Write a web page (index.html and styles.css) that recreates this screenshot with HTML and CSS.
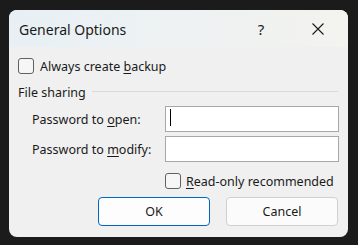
FILE: index.html
```html
<!DOCTYPE html>
<html lang="en">
<head>
    <meta charset="UTF-8">
    <meta name="viewport" content="width=device-width, initial-scale=1.0">
    <title>General Options</title>
    <link rel="stylesheet" href="styles.css">
</head>
<body>

<!-- Dialog Window -->
<div class="dialog">
    <div class="titlebar">
        <span class="title">General Options</span>
        <span class="title-btn help">?</span>
        <span class="title-btn close">
            <svg width="12" height="12" viewBox="0 0 12 12">
                <path d="M0.5 0.5 L11.5 11.5 M11.5 0.5 L0.5 11.5" stroke="#1a1a1a" stroke-width="1.1" fill="none"/>
            </svg>
        </span>
    </div>

    <div class="content">
        <label class="check-row">
            <span class="box"></span>
            <span>Always create <u>b</u>ackup</span>
        </label>

        <div class="group-title">
            <span>File sharing</span>
            <span class="rule"></span>
        </div>

        <div class="pw-grid">
            <span class="pw-label">Password to <u>o</u>pen:</span>
            <div class="field"><span class="caret"></span></div>
            <span class="pw-label">Password to <u>m</u>odify:</span>
            <div class="field"></div>
        </div>

        <label class="check-row readonly">
            <span class="box"></span>
            <span><u>R</u>ead-only recommended</span>
        </label>

        <div class="buttons">
            <button type="button" class="btn default">OK</button>
            <button type="button" class="btn">Cancel</button>
        </div>
    </div>
</div>

</body>
</html>
```

FILE: styles.css
```css
/* Basic Reset */
* {
    box-sizing: border-box;
    margin: 0;
    padding: 0;
    font-family: "Noto Sans", Arial, sans-serif;
}

body {
    background-color: #1b1b1b;
    padding: 10px 10px 8px 9px;
    color: #1a1a1a;
}

/* Dialog Frame */
.dialog {
    width: 339px;
    height: 227px;
    background-color: #f0f0f0;
    border-radius: 8px;
    overflow: hidden;
}

/* Title Bar */
.titlebar {
    height: 37px;
    display: flex;
    align-items: center;
    background: linear-gradient(to right, #e8f0f5, #f3f3ef);
    padding-left: 10px;
    padding-right: 7px;
}

.title {
    flex: 1;
    font-size: 14px;
    padding-top: 1px;
}

.title-btn {
    width: 46px;
    height: 37px;
    display: flex;
    align-items: center;
    justify-content: center;
}

.help {
    font-size: 15px;
    padding-top: 1px;
    margin-right: 11px;
}

.close svg {
    display: block;
}

/* Content */
.content {
    padding: 11px 10px 0 9px;
    font-size: 12.5px;
    white-space: nowrap;
}

.check-row {
    display: flex;
    align-items: center;
    height: 16px;
    gap: 6px;
}

.box {
    flex: 0 0 16px;
    height: 16px;
    border: 1px solid #606060;
    border-radius: 3px;
    background-color: #f6f6f6;
}

u {
    text-decoration-thickness: 1px;
    text-underline-offset: 2px;
}

.group-title {
    display: flex;
    align-items: center;
    gap: 6px;
    margin-top: 9px;
    height: 18px;
}

.rule {
    flex: 1;
    height: 1px;
    background-color: #dadada;
    margin-top: -2px;
}

.pw-grid {
    display: grid;
    grid-template-columns: 133px 174px;
    row-gap: 4px;
    padding-left: 14px;
    margin-top: 5px;
    align-items: center;
}

.field {
    height: 26px;
    background-color: #fff;
    border: 1px solid #a8a8a8;
    position: relative;
}

.caret {
    position: absolute;
    left: 4px;
    top: 2px;
    width: 1px;
    height: 17px;
    background-color: #000;
}

.check-row.readonly {
    margin-top: 11px;
    margin-left: 147px;
    gap: 5px;
}

.buttons {
    display: flex;
    justify-content: flex-end;
    gap: 16px;
    margin-top: 8px;
}

.btn {
    width: 112px;
    height: 29px;
    font-size: 12.5px;
    color: #1a1a1a;
    background-color: #fbfbfb;
    border: 1px solid #d0d0d0;
    border-radius: 4px;
}

.btn.default {
    border-color: #0067c0;
    background-color: #fdfdfd;
}
```
